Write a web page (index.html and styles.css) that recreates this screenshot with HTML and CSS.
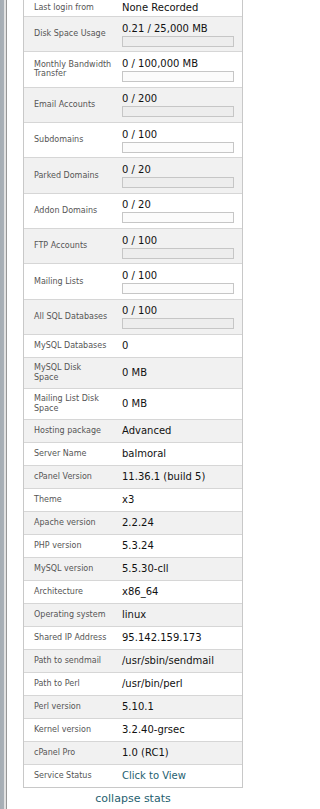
FILE: index.html
```html
<!DOCTYPE html>
<html lang="en">
<head>
<meta charset="utf-8">
<title>Stats</title>
<link rel="stylesheet" href="styles.css">
</head>
<body>
<div class="page">
  <div class="rail"></div>
  <div class="content">
    <div class="stats">
      <div class="row first"><div class="label">Last login from</div><div class="value">None Recorded</div></div>
      <div class="row meter"><div class="label">Disk Space Usage</div><div class="value"><div class="amount">0.21 / 25,000 MB</div><div class="bar"></div></div></div>
      <div class="row meter"><div class="label">Monthly Bandwidth<br>Transfer</div><div class="value"><div class="amount">0 / 100,000 MB</div><div class="bar"></div></div></div>
      <div class="row meter"><div class="label">Email Accounts</div><div class="value"><div class="amount">0 / 200</div><div class="bar"></div></div></div>
      <div class="row meter"><div class="label">Subdomains</div><div class="value"><div class="amount">0 / 100</div><div class="bar"></div></div></div>
      <div class="row meter"><div class="label">Parked Domains</div><div class="value"><div class="amount">0 / 20</div><div class="bar"></div></div></div>
      <div class="row meter"><div class="label">Addon Domains</div><div class="value"><div class="amount">0 / 20</div><div class="bar"></div></div></div>
      <div class="row meter"><div class="label">FTP Accounts</div><div class="value"><div class="amount">0 / 100</div><div class="bar"></div></div></div>
      <div class="row meter"><div class="label">Mailing Lists</div><div class="value"><div class="amount">0 / 100</div><div class="bar"></div></div></div>
      <div class="row meter"><div class="label">All SQL Databases</div><div class="value"><div class="amount">0 / 100</div><div class="bar"></div></div></div>
      <div class="row"><div class="label">MySQL Databases</div><div class="value">0</div></div>
      <div class="row tall"><div class="label">MySQL Disk<br>Space</div><div class="value">0 MB</div></div>
      <div class="row tall"><div class="label">Mailing List Disk<br>Space</div><div class="value">0 MB</div></div>
      <div class="row"><div class="label">Hosting package</div><div class="value">Advanced</div></div>
      <div class="row"><div class="label">Server Name</div><div class="value">balmoral</div></div>
      <div class="row"><div class="label">cPanel Version</div><div class="value">11.36.1 (build 5)</div></div>
      <div class="row"><div class="label">Theme</div><div class="value">x3</div></div>
      <div class="row"><div class="label">Apache version</div><div class="value">2.2.24</div></div>
      <div class="row"><div class="label">PHP version</div><div class="value">5.3.24</div></div>
      <div class="row"><div class="label">MySQL version</div><div class="value">5.5.30-cll</div></div>
      <div class="row"><div class="label">Architecture</div><div class="value">x86_64</div></div>
      <div class="row"><div class="label">Operating system</div><div class="value">linux</div></div>
      <div class="row"><div class="label">Shared IP Address</div><div class="value">95.142.159.173</div></div>
      <div class="row"><div class="label">Path to sendmail</div><div class="value">/usr/sbin/sendmail</div></div>
      <div class="row"><div class="label">Path to Perl</div><div class="value">/usr/bin/perl</div></div>
      <div class="row"><div class="label">Perl version</div><div class="value">5.10.1</div></div>
      <div class="row"><div class="label">Kernel version</div><div class="value">3.2.40-grsec</div></div>
      <div class="row"><div class="label">cPanel Pro</div><div class="value">1.0 (RC1)</div></div>
      <div class="row"><div class="label">Service Status</div><div class="value"><a class="link" href="#">Click to View</a></div></div>
    </div>
    <div class="collapse"><a class="link" href="#">collapse stats</a></div>
  </div>
</div>
</body>
</html>
```
FILE: styles.css
```css
html, body {
  margin: 0;
  padding: 0;
  background: #ffffff;
}
body {
  font-family: "DejaVu Sans", Verdana, sans-serif;
}
.page {
  display: flex;
  height: 809px;
  overflow: hidden;
}
.rail {
  flex: none;
  width: 7px;
  background: linear-gradient(to right, #a6aeb5 0, #a9b0b7 4px, #e2e2e2 4px, #e2e2e2 6px, #979797 6px, #979797 7px);
}
.content {
  flex: none;
  width: 220px;
  padding-left: 16px;
}
.stats {
  border: 1px solid #c8c8c8;
  margin-top: -1px;
}
.row {
  display: grid;
  grid-template-columns: 98px 1fr;
  align-items: center;
  box-sizing: border-box;
  height: 23px;
  border-bottom: 1px solid #d6d6d6;
  background: #ffffff;
}
.row:nth-child(even) {
  background: #f1f1f1;
}
.row:last-child {
  border-bottom: none;
  height: 22px;
}
.row.first {
  height: 17px;
}
.row.meter {
  height: 35.33px;
}
.row.tall {
  height: 31px;
}
.label {
  padding-left: 10px;
  font-size: 8px;
  line-height: 9.5px;
  color: #555555;
  white-space: nowrap;
}
.value {
  font-size: 10px;
  line-height: 12px;
  color: #111111;
  padding-right: 8px;
  white-space: nowrap;
}
.meter .value {
  padding-top: 1px;
}
.bar {
  box-sizing: border-box;
  height: 11px;
  margin-top: 1px;
  border: 1px solid #c6c6c6;
  background: rgba(0, 0, 0, 0.015);
}
.link {
  color: #1f6170;
  text-decoration: none;
}
.collapse {
  text-align: center;
  padding-top: 4px;
  font-size: 11px;
  line-height: 14px;
}
```
